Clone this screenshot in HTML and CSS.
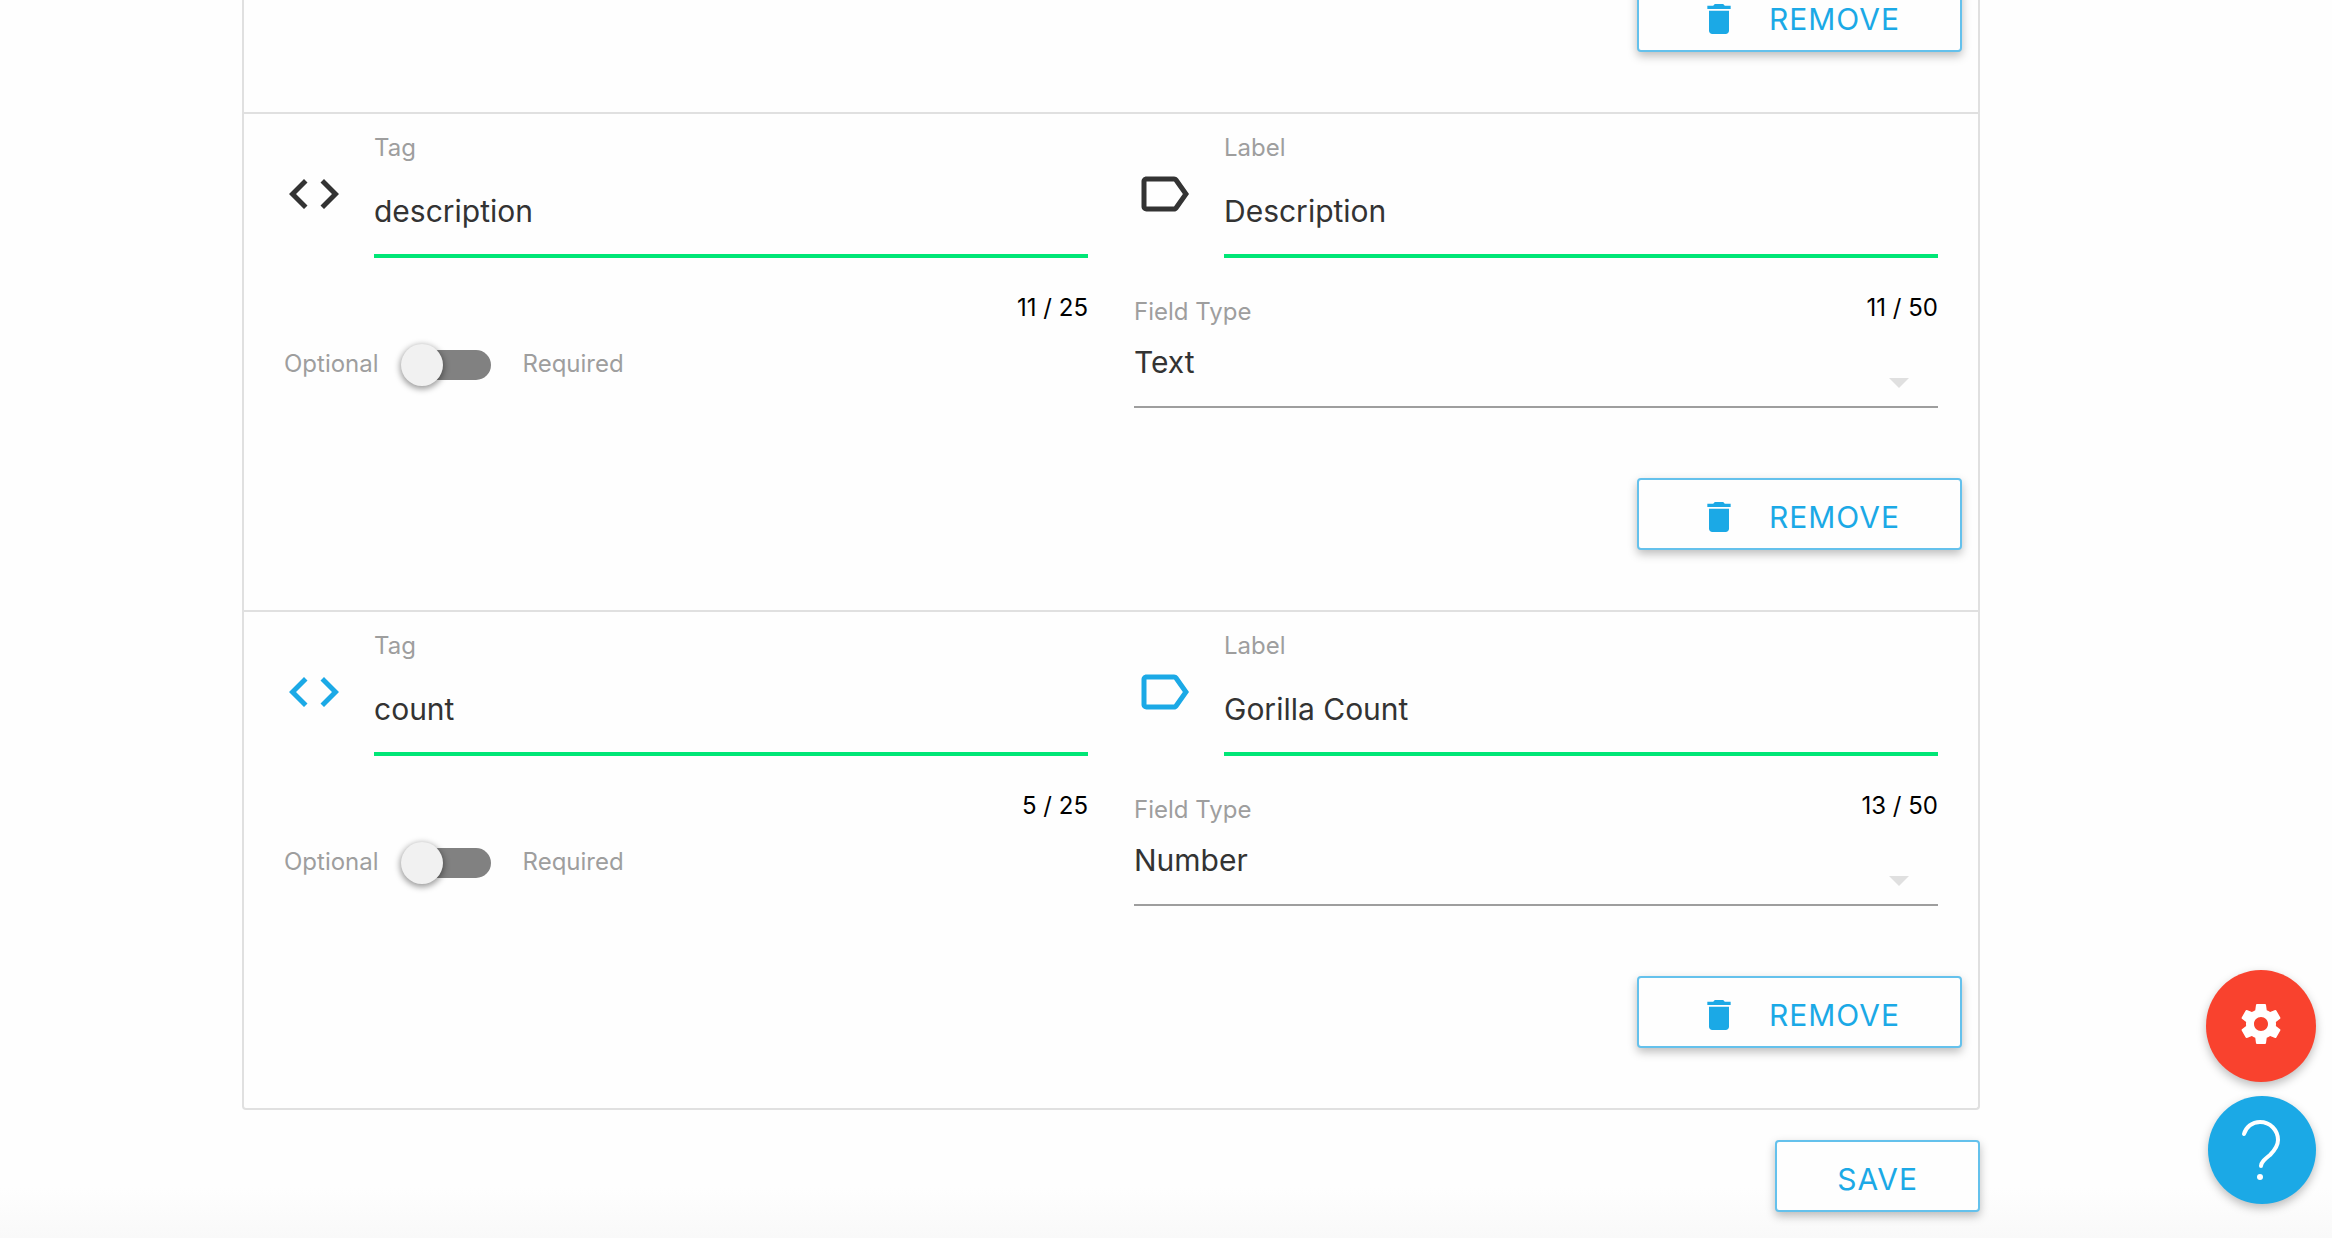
FILE: index.html
```html
<!DOCTYPE html>
<html lang="en">
<head>
<meta charset="utf-8">
<title>Form fields</title>
<link rel="stylesheet" href="styles.css">
</head>
<body>
<svg class="sprite" aria-hidden="true">
  <symbol id="code" viewBox="0 0 24 24"><path d="M9.4 16.6L4.8 12l4.6-4.6L8 6l-6 6 6 6 1.4-1.4zm5.2 0l4.6-4.6-4.6-4.6L16 6l6 6-6 6-1.4-1.4z"/></symbol>
  <symbol id="label" viewBox="0 0 24 24"><path d="M17.63 5.84C17.27 5.33 16.67 5 16 5L5 5.01C3.9 5.01 3 5.9 3 7v10c0 1.1.9 1.99 2 1.99L16 19c.67 0 1.27-.33 1.63-.84L22 12l-4.37-6.16zM16 17H5V7h11l3.55 5L16 17z"/></symbol>
  <symbol id="trash" viewBox="0 0 24 24"><path d="M6 19c0 1.1.9 2 2 2h8c1.1 0 2-.9 2-2V7H6v12zM19 4h-3.500l-1-1h-5l-1 1H5v2h14V4z"/></symbol>
</svg>
<main class="page">
  <ul class="fields">
    <li class="field">
      <div class="actions"><button class="btn" type="button"><svg class="btn-icon"><use href="#trash"/></svg>REMOVE</button></div>
    </li>
    <li class="field">
      <div class="columns">
        <div class="column">
          <div class="entry">
            <svg class="icon"><use href="#code"/></svg>
            <div class="control">
              <label class="caption" for="tag-1">Tag</label>
              <input class="text" id="tag-1" type="text" value="description">
            </div>
          </div>
          <div class="meta"><span class="counter">11 / 25</span></div>
          <label class="switch">
            <span>Optional</span>
            <input class="toggle" type="checkbox">
            <span>Required</span>
          </label>
        </div>
        <div class="column">
          <div class="entry">
            <svg class="icon"><use href="#label"/></svg>
            <div class="control">
              <label class="caption" for="label-1">Label</label>
              <input class="text" id="label-1" type="text" value="Description">
            </div>
          </div>
          <div class="meta"><label class="caption" for="type-1">Field Type</label><span class="counter">11 / 50</span></div>
          <div class="picker">
            <select class="select" id="type-1"><option>Text</option><option>Number</option></select>
          </div>
        </div>
      </div>
      <div class="actions"><button class="btn" type="button"><svg class="btn-icon"><use href="#trash"/></svg>REMOVE</button></div>
    </li>
    <li class="field">
      <div class="columns">
        <div class="column">
          <div class="entry">
            <svg class="icon icon-active"><use href="#code"/></svg>
            <div class="control">
              <label class="caption" for="tag-2">Tag</label>
              <input class="text" id="tag-2" type="text" value="count">
            </div>
          </div>
          <div class="meta"><span class="counter">5 / 25</span></div>
          <label class="switch">
            <span>Optional</span>
            <input class="toggle" type="checkbox">
            <span>Required</span>
          </label>
        </div>
        <div class="column">
          <div class="entry">
            <svg class="icon icon-active"><use href="#label"/></svg>
            <div class="control">
              <label class="caption" for="label-2">Label</label>
              <input class="text" id="label-2" type="text" value="Gorilla Count">
            </div>
          </div>
          <div class="meta"><label class="caption" for="type-2">Field Type</label><span class="counter">13 / 50</span></div>
          <div class="picker">
            <select class="select" id="type-2"><option>Text</option><option selected>Number</option></select>
          </div>
        </div>
      </div>
      <div class="actions"><button class="btn" type="button"><svg class="btn-icon"><use href="#trash"/></svg>REMOVE</button></div>
    </li>
  </ul>
  <div class="footer"><button class="btn" type="submit">SAVE</button></div>
</main>
<div class="floating">
  <button class="fab fab-settings" type="button" aria-label="Settings">
    <svg width="48" height="48" viewBox="0 0 24 24"><path fill="#fff" d="M19.430 12.980c.04-.32.07-.64.07-.98s-.03-.66-.07-.98l2.110-1.650c.19-.15.24-.42.12-.64l-2-3.460c-.12-.22-.39-.3-.61-.22l-2.490 1c-.52-.4-1.080-.73-1.690-.98l-.38-2.650C14.460 2.180 14.250 2 14 2h-4c-.25 0-.46.18-.49.42l-.38 2.650c-.61.25-1.170.59-1.690.98l-2.490-1c-.23-.09-.49 0-.61.22l-2 3.460c-.13.22-.07.49.12.64l2.110 1.650c-.04.32-.07.65-.07.98s.03.66.07.98l-2.110 1.650c-.19.15-.24.42-.12.64l2 3.460c.12.22.39.3.61.22l2.490-1c.52.4 1.080.73 1.690.98l.38 2.650c.03.24.24.42.49.42h4c.25 0 .46-.18.49-.42l.38-2.650c.61-.25 1.170-.59 1.690-.98l2.490 1c.23.09.49 0 .61-.22l2-3.460c.12-.22.07-.49-.12-.64l-2.110-1.650zM12 15.500c-1.930 0-3.500-1.570-3.500-3.500s1.570-3.500 3.500-3.500 3.500 1.570 3.500 3.500-1.570 3.500-3.500 3.500z"/></svg>
  </button>
  <button class="fab fab-help" type="button" aria-label="Help">
    <svg width="108" height="108" viewBox="0 0 108 108"><path d="M36 38C38 31 44 26 52 26C62 26 70 34 70 44C70 50 67 54 62 59C57 63 53 66 53 70" fill="none" stroke="#fff" stroke-width="4" stroke-linecap="round"/><circle cx="52" cy="81" r="3" fill="#fff"/></svg>
  </button>
</div>
</body>
</html>
```
FILE: styles.css
```css
* {
  box-sizing: border-box;
}

body {
  margin: 0;
  min-height: 100vh;
  overflow: hidden;
  background: #fefefe linear-gradient(to top, #f9f9f9, #fefefe 50px) no-repeat;
  font-family: Inter, "Liberation Sans", sans-serif;
  font-size: 24px;
  line-height: 32px;
  color: #333;
}

.sprite {
  display: none;
}

input,
select,
button {
  margin: 0;
  font-family: inherit;
  color: inherit;
}

.page {
  margin: -20px 352px 0 242px;
  padding-bottom: 26px;
}

.fields {
  margin: 0;
  padding: 0;
  list-style: none;
  border: 2px solid #e0e0e0;
  border-top: 0;
  border-radius: 0 0 4px 4px;
}

.field + .field {
  padding-top: 18px;
  border-top: 2px solid #e0e0e0;
}

.columns {
  display: grid;
  grid-template-columns: 1fr 1fr;
  gap: 46px;
  padding: 0 40px;
  margin-bottom: 70px;
}

.entry {
  display: flex;
  gap: 30px;
  margin-bottom: 34px;
}

.icon {
  flex: none;
  width: 60px;
  height: 60px;
  margin-top: 32px;
  fill: #333;
}

.icon-active {
  fill: #1ba9e6;
}

.control {
  display: flex;
  flex: 1;
  flex-direction: column;
}

.caption,
.switch {
  color: #9e9e9e;
}

.text {
  width: 100%;
  height: 94px;
  padding: 4px 0 0;
  border: 0;
  border-bottom: 4px solid #00e676;
  background: transparent;
  font-size: 30px;
}

.meta {
  display: flex;
  justify-content: space-between;
  height: 36px;
}

.meta .caption {
  align-self: flex-end;
}

.counter {
  margin-left: auto;
  color: #000;
}

.switch {
  display: flex;
  align-items: center;
  gap: 32px;
  height: 74px;
}

.switch span {
  padding-bottom: 2px;
}

.toggle {
  position: relative;
  width: 80px;
  height: 30px;
  appearance: none;
  border-radius: 15px;
  background: #818181;
}

.toggle::before {
  content: "";
  position: absolute;
  top: -6px;
  left: -10px;
  width: 42px;
  height: 42px;
  border-radius: 50%;
  background: #f1f1f1;
  box-shadow: 0 2px 6px 1px rgba(0, 0, 0, .4);
}

.picker {
  position: relative;
}

.picker::after {
  content: "";
  position: absolute;
  top: 50px;
  right: 29px;
  border: 10px solid transparent;
  border-top-color: #e0e0e0;
  border-bottom: 0;
  pointer-events: none;
}

.select {
  width: 100%;
  height: 80px;
  padding: 0 0 10px;
  appearance: none;
  border: 0;
  border-bottom: 2px solid #9e9e9e;
  border-radius: 0;
  background: transparent;
  font-size: 30px;
}

.actions {
  display: flex;
  justify-content: flex-end;
  padding: 0 16px 60px;
}

.btn {
  display: flex;
  align-items: center;
  gap: 30px;
  height: 72px;
  padding: 6px 60px 0;
  border: 2px solid #64c1ec;
  border-radius: 4px;
  background: #fefefe;
  box-shadow: 0 4px 10px rgba(0, 0, 0, .26);
  font-size: 30px;
  letter-spacing: 1px;
  color: #1ba9e6;
}

.btn-icon {
  width: 40px;
  height: 40px;
  fill: currentColor;
}

.footer {
  display: flex;
  justify-content: flex-end;
  padding-top: 30px;
}

.floating {
  position: fixed;
  right: 16px;
  bottom: 34px;
  display: flex;
  flex-direction: column;
  align-items: flex-end;
  gap: 14px;
}

.fab {
  display: flex;
  align-items: center;
  justify-content: center;
  padding: 0;
  border: 0;
  border-radius: 50%;
  box-shadow: 0 4px 10px rgba(0, 0, 0, .26);
}

.fab-settings {
  width: 110px;
  height: 112px;
  padding-bottom: 4px;
  background: #f9422e;
}

.fab-help {
  width: 108px;
  height: 108px;
  background: #1ba9e6;
}
```
